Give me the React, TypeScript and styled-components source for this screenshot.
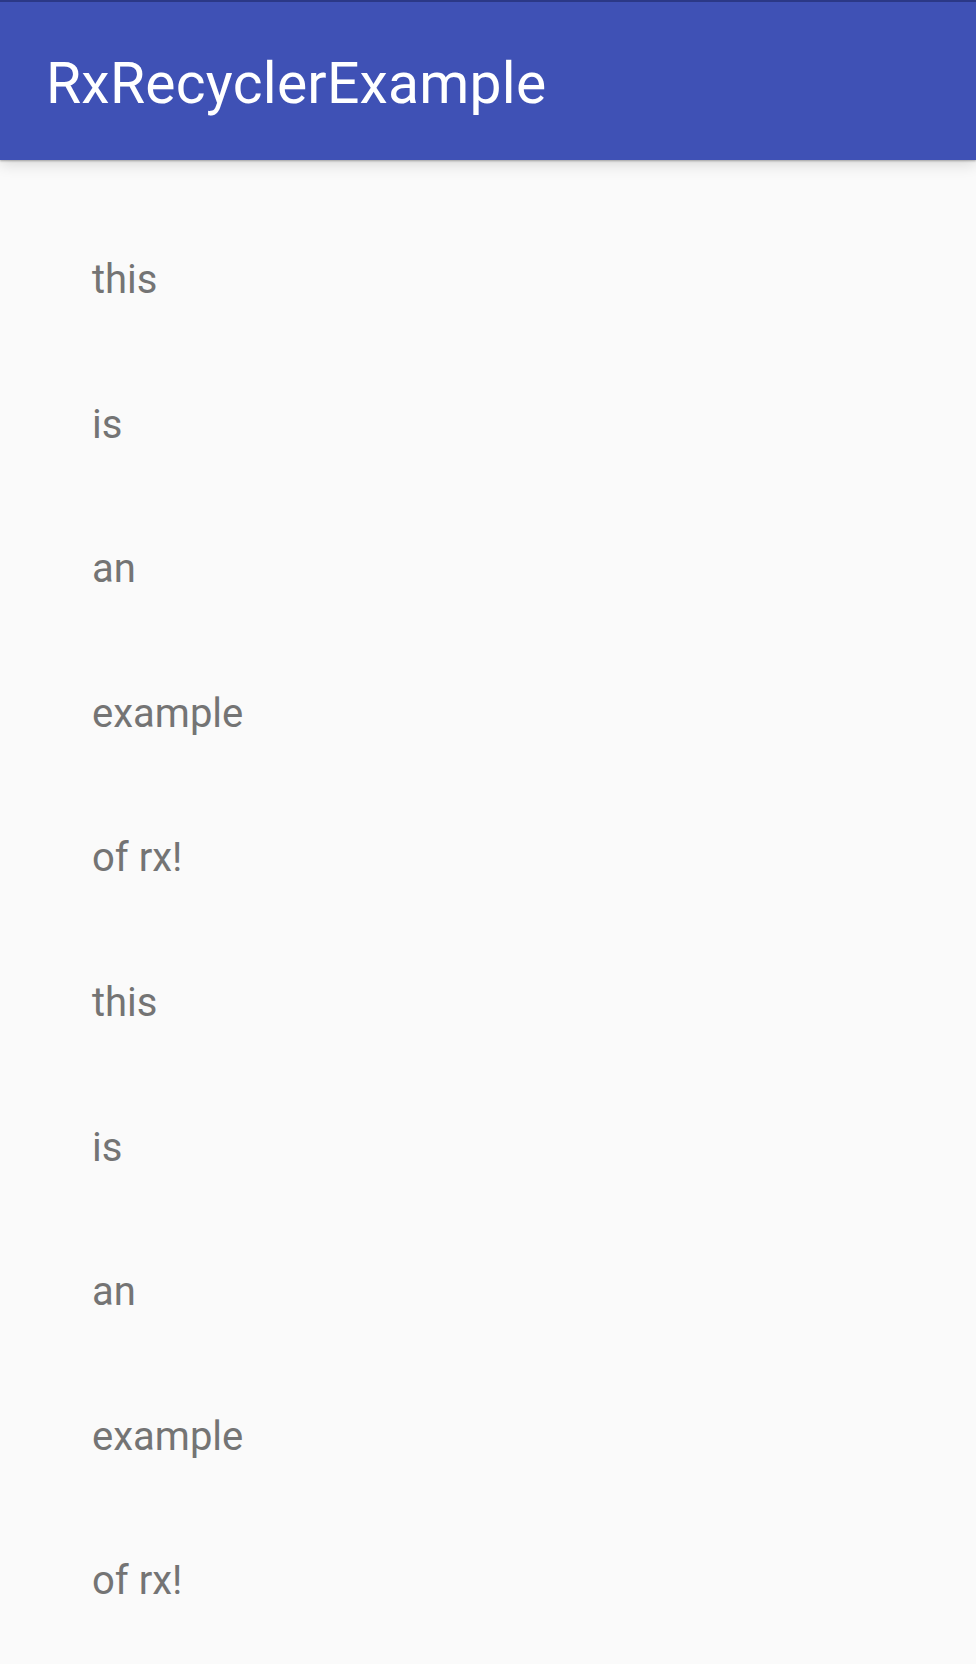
import React from "react";
import styled, { createGlobalStyle } from "styled-components";

const GlobalStyle = createGlobalStyle`
  html, body {
    margin: 0;
    padding: 0;
    background: #fafafa;
  }
  body {
    font-family: Roboto, "Noto Sans", "Liberation Sans", sans-serif;
    -webkit-font-smoothing: antialiased;
  }
  #root {
    min-height: 100vh;
  }
`;

const Screen = styled.div`
  display: flex;
  flex-direction: column;
  width: 976px;
  min-height: 1664px;
  background: #fafafa;
  overflow: hidden;
`;

const Toolbar = styled.header`
  position: relative;
  z-index: 1;
  box-sizing: border-box;
  height: 160px;
  display: flex;
  align-items: flex-start;
  padding: 50px 0 0 46px;
  background: #3f51b5;
  border-top: 2px solid #2b3886;
  box-shadow: 0 1px 2px rgba(0, 0, 0, 0.3), 0 4px 14px rgba(0, 0, 0, 0.14);
`;

const Title = styled.h1`
  margin: 0;
  font-family: Roboto, "Noto Sans", sans-serif;
  font-weight: 400;
  font-size: 57px;
  line-height: 64px;
  color: #ffffff;
  letter-spacing: 0.25px;
`;

const List = styled.ul`
  list-style: none;
  margin: 0;
  padding: 48px 0 0 0;
  display: flex;
  flex-direction: column;
`;

const Row = styled.li`
  height: 144.56px;
  display: flex;
  align-items: center;
  padding-left: 92px;
  font-family: Roboto, "Noto Sans", sans-serif;
  font-size: 40px;
  line-height: 48px;
  color: #747474;
`;

const words = ["this", "is", "an", "example", "of rx!"];
const items = [...words, ...words];

export default function App() {
  return (
    <>
      <GlobalStyle />
      <Screen>
        <Toolbar>
          <Title>RxRecyclerExample</Title>
        </Toolbar>
        <List>
          {items.map((w, i) => (
            <Row key={i}>{w}</Row>
          ))}
        </List>
      </Screen>
    </>
  );
}
